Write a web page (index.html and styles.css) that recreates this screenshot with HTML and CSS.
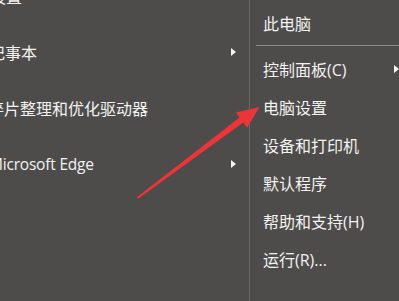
FILE: index.html
```html
<!DOCTYPE html>
<html>
<head>
<meta charset="utf-8">
<link rel="stylesheet" href="styles.css">
</head>
<body>
<div class="menu">
  <div class="left">
    <div class="litem"><span class="ltext">设置</span></div>
    <div class="litem"><span class="ltext shift-big">记事本</span><span class="sub"></span></div>
    <div class="litem"><span class="ltext shift-small">碎片整理和优化驱动器</span></div>
    <div class="litem"><span class="ltext shift-m latin">Microsoft Edge</span><span class="sub"></span></div>
  </div>
  <div class="right">
    <div class="ritem">此电脑</div>
    <div class="sep"></div>
    <div class="ritem">控制面板(C)<span class="sub rsub"></span></div>
    <div class="ritem">电脑设置</div>
    <div class="ritem">设备和打印机</div>
    <div class="ritem">默认程序</div>
    <div class="ritem">帮助和支持(H)</div>
    <div class="ritem">运行(R)...</div>
  </div>
</div>
<svg class="pointer" width="399" height="301" viewBox="0 0 399 301">
  <polygon points="136.5,197.5 239.5,117.6 236,112.4 259.5,107 247,127.8 243.3,122.6 138.5,198.5" fill="#ec3538"/>
</svg>
</body>
</html>
```

FILE: styles.css
```css
html, body {
  margin: 0;
  padding: 0;
  background: #4e4c4a;
  width: 399px;
  height: 301px;
  overflow: hidden;
}
body {
  position: relative;
  font-family: "Open Sans", "Noto Sans CJK SC", sans-serif;
  font-size: 16px;
  color: #f2f2f2;
}
.menu {
  display: flex;
  height: 301px;
}
.left {
  width: 250px;
  border-right: 1px solid #6b6967;
  box-sizing: border-box;
  margin-top: -32px;
  height: 333px;
  overflow: hidden;
  flex: none;
}
.litem {
  height: 56px;
  display: flex;
  align-items: center;
  position: relative;
}
.ltext {
  margin-left: -10px;
  white-space: nowrap;
}
.shift-big { margin-left: -11px; }
.shift-small { margin-left: -12px; }
.shift-m { margin-left: -11px; }
.latin { font-size: 15.5px; letter-spacing: -0.2px; }
.sub {
  width: 0;
  height: 0;
  border-top: 4px solid transparent;
  border-bottom: 4px solid transparent;
  border-left: 5px solid #f4f4f4;
  position: absolute;
  left: 231px;
  top: 24px;
}
.right {
  flex: 1;
  padding-top: 4px;
}
.ritem {
  height: 38px;
  display: flex;
  align-items: center;
  padding-left: 13px;
  position: relative;
  white-space: nowrap;
}
.rsub {
  left: auto;
  right: 0;
  top: 15px;
}
.sep {
  height: 1px;
  background: #8c8a88;
  margin: 3px 0 4px 6px;
}
.pointer {
  position: absolute;
  left: 0;
  top: 0;
}
```
